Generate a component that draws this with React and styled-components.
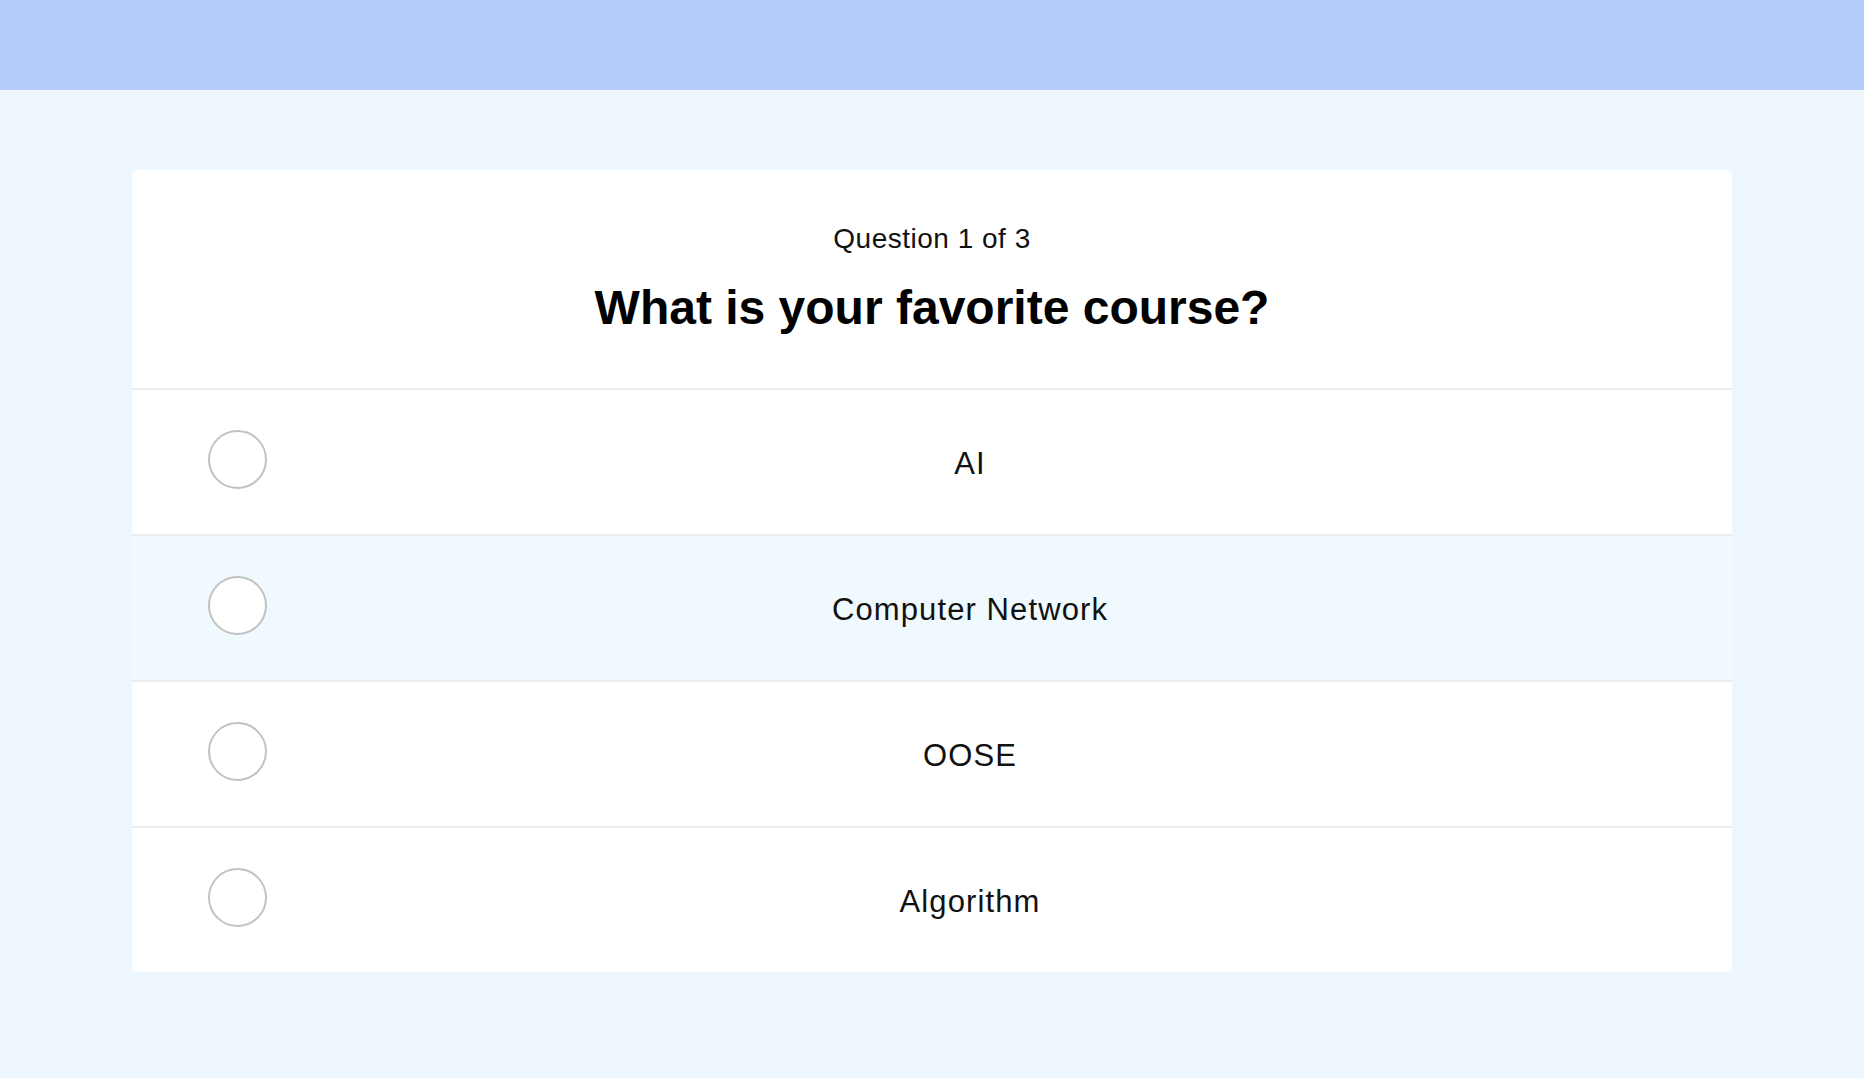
import React from 'react';
import styled, { createGlobalStyle } from 'styled-components';

const GlobalStyle = createGlobalStyle`
  body {
    margin: 0;
    background-color: #eef6fe;
    font-family: "Liberation Sans", Arial, sans-serif;
    color: #111;
  }
`;

const Page = styled.div`
  min-height: 1078px;
  display: flex;
  flex-direction: column;
`;

const TopBar = styled.header`
  height: 90px;
  background-color: #b4cdfd;
`;

const Main = styled.main`
  padding: 80px 0;
  display: flex;
  justify-content: center;
`;

const Card = styled.section`
  width: 1600px;
  background-color: #fff;
  border-radius: 5px;
  overflow: hidden;
`;

const QuestionHead = styled.div`
  display: flex;
  flex-direction: column;
  align-items: center;
  padding: 49px 0 50px;
  gap: 19px;
`;

const Counter = styled.div`
  font-size: 28px;
  line-height: 40px;
  letter-spacing: 0.5px;
  color: #111;
`;

const Title = styled.h1`
  margin: 0;
  font-size: 48px;
  line-height: 60px;
  font-weight: 700;
  color: #000;
`;

const OptionList = styled.ul`
  list-style: none;
  margin: 0;
  padding: 0;
`;

const OptionRow = styled.li`
  display: grid;
  grid-template-columns: 59px 1fr;
  align-items: center;
  height: 144px;
  padding: 0 59px 0 76px;
  border-top: 2px solid #ebecee;
  background-color: ${(p) => (p.$hover ? '#eff9fe' : '#fff')};
  cursor: pointer;
`;

const Radio = styled.span`
  box-sizing: border-box;
  width: 59px;
  height: 59px;
  margin-bottom: 6px;
  border-radius: 50%;
  border: 2px solid #c2c2c2;
  background-color: #fff;
`;

const OptionLabel = styled.span`
  padding-top: 3px;
  text-align: center;
  font-size: 31px;
  line-height: 40px;
  letter-spacing: 1.1px;
  color: #111;
`;

const options = ['AI', 'Computer Network', 'OOSE', 'Algorithm'];

function App() {
  return (
    <Page>
      <GlobalStyle />
      <TopBar />
      <Main>
        <Card>
          <QuestionHead>
            <Counter>Question 1 of 3</Counter>
            <Title>What is your favorite course?</Title>
          </QuestionHead>
          <OptionList>
            {options.map((opt, i) => (
              <OptionRow key={opt} $hover={i === 1}>
                <Radio />
                <OptionLabel>{opt}</OptionLabel>
              </OptionRow>
            ))}
          </OptionList>
        </Card>
      </Main>
    </Page>
  );
}

export default App;
